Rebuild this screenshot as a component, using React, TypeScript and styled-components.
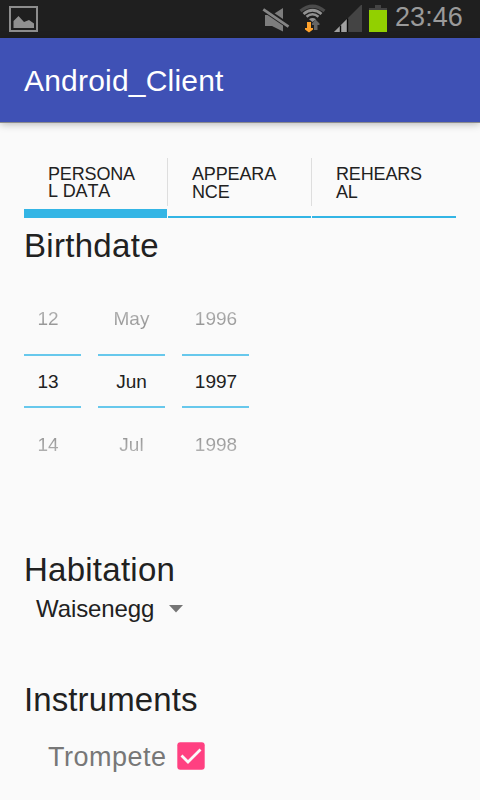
import React from 'react';
import styled, { createGlobalStyle } from 'styled-components';

const GlobalStyle = createGlobalStyle`
  * { box-sizing: border-box; }
  html, body { margin: 0; background: #fafafa; }
  body { font-family: "Liberation Sans", Arial, sans-serif; overflow: hidden; }
`;

const Screen = styled.div`
  width: 480px;
  height: 800px;
  overflow: hidden;
  background: #fafafa;
  color: #212121;
  display: flex;
  flex-direction: column;
`;

const StatusBar = styled.header`
  height: 38px;
  flex: none;
  padding: 0 17px 0 9px;
  background: #1f1f1f;
  display: flex;
  align-items: flex-start;
  justify-content: space-between;
`;

const StatusGroup = styled.div`
  display: flex;
  height: 38px;
`;

const StatusIcon = styled.svg<{ $gap?: number }>`
  display: block;
  flex: none;
  margin-right: ${({ $gap = 0 }) => $gap}px;
`;

const Clock = styled.time`
  font-size: 27px;
  line-height: 34px;
  letter-spacing: 0.1px;
  color: #9a9a9a;
`;

const AppBar = styled.div`
  height: 84px;
  flex: none;
  padding: 1px 24px 0;
  display: flex;
  align-items: center;
  background: #3f51b5;
  box-shadow: 0 1px 0 #8b8b8d, 0 2px 8px rgba(0, 0, 0, 0.28);
`;

const AppTitle = styled.h1`
  margin: 0;
  font-size: 30px;
  font-weight: 400;
  letter-spacing: 0.2px;
  color: #fff;
`;

const Content = styled.main`
  padding: 36px 24px 0;
`;

const Tabs = styled.nav`
  height: 60px;
  display: grid;
  grid-template-columns: 143px 1px 143px 1px 144px;
`;

const Tab = styled.button<{ $active?: boolean }>`
  border: 0;
  border-bottom: ${({ $active }) => ($active ? 9 : 2)}px solid #33b5e5;
  padding: ${({ $active }) => ($active ? 8 : 7)}px 24px 0;
  background: transparent;
  color: #212121;
  font: 18px/${({ $active }) => ($active ? 17 : 18)}px "Liberation Sans", Arial, sans-serif;
  font-kerning: none;
  letter-spacing: -0.15px;
  text-align: left;
  display: flex;
  align-items: flex-start;
  white-space: pre;
`;

const TabDivider = styled.span`
  height: 48px;
  background: #dedede;
`;

const Section = styled.section<{ $height: number }>`
  height: ${({ $height }) => $height}px;
`;

const BirthdateSection = styled(Section)`
  padding-top: 8px;
`;

const Heading = styled.h2<{ $spacing?: number }>`
  margin: 0;
  height: 40px;
  font-size: 33px;
  line-height: 40px;
  font-weight: 400;
  letter-spacing: ${({ $spacing = 0.3 }) => $spacing}px;
`;

const DatePicker = styled.div`
  margin-top: 21px;
  display: grid;
  grid-template-columns: 57px 67px 67px;
  column-gap: 17px;
`;

const Wheel = styled.div<{ $inset?: number }>`
  display: flex;
  flex-direction: column;
  text-align: center;
  font-size: 19px;
  text-indent: ${({ $inset = 0 }) => $inset}px;
`;

const Neighbour = styled.div<{ $side: 'before' | 'after' }>`
  height: 63px;
  line-height: 63px;
  color: transparent;
  background: linear-gradient(
    ${({ $side }) => ($side === 'before' ? 'to bottom' : 'to top')},
    #b4b4b4 35%,
    #929292 65%
  );
  background-clip: text;
  -webkit-background-clip: text;
`;

const Selected = styled.div`
  height: 54px;
  margin: 4px 0 5px;
  border-top: 2px solid #67c8ec;
  border-bottom: 2px solid #67c8ec;
  line-height: 51px;
`;

const Spinner = styled.div`
  height: 38px;
  padding-left: 12px;
  display: flex;
  align-items: center;
  font-size: 24px;
  letter-spacing: -0.1px;
`;

const Caret = styled.svg`
  display: block;
  margin: -1px 0 0 15px;
`;

const CheckRow = styled.label`
  margin-top: 16px;
  padding-left: 24px;
  height: 42px;
  display: flex;
  align-items: center;
  color: #777;
  font-size: 27px;
  letter-spacing: 0.5px;
`;

const CheckBox = styled.svg`
  display: block;
  margin: -2px 0 0 10px;
`;

const tabs = [
  { lines: 'PERSONA\nL DATA', active: true },
  { lines: 'APPEARA\nNCE' },
  { lines: 'REHEARS\nAL' },
];

const wheels = [
  { values: ['12', '13', '14'], inset: -9 },
  { values: ['May', 'Jun', 'Jul'], inset: 0 },
  { values: ['1996', '1997', '1998'], inset: 1 },
];

function PictureIcon() {
  return (
    <StatusIcon width="29" height="38" viewBox="0 0 29 38">
      <path d="M1 7H28V31H1Z" fill="none" stroke="#8d8d8d" strokeWidth="2" />
      <path d="M4.5 28V21L9.5 16L15 22L20 20L25 23.5V28Z" fill="#909090" />
    </StatusIcon>
  );
}

function MutedIcon() {
  return (
    <StatusIcon width="28" height="38" viewBox="0 0 28 38" $gap={9}>
      <path d="M3 15H10L21 8V31.5L10 26H3Z" fill="#7d7d7d" />
      <path d="M0 8L28 27" stroke="#1f1f1f" strokeWidth="5.4" />
      <path d="M1.3 9.3L26.5 26.6" stroke="#858585" strokeWidth="2.8" />
    </StatusIcon>
  );
}

function WifiIcon() {
  return (
    <StatusIcon width="27" height="38" viewBox="0 0 27 38" $gap={8}>
      <path d="M1.5 11Q13.5 1.5 25.5 11" fill="none" stroke="#4b4b4b" strokeWidth="3.2" />
      <path d="M4.5 14Q13.5 6.5 22.5 14" fill="none" stroke="#929292" strokeWidth="2.8" />
      <path d="M7.5 16.8Q13.5 11.8 19.5 16.8" fill="none" stroke="#929292" strokeWidth="2.5" />
      <path d="M10 19.3Q13.5 16.8 17 19.3L13.5 22Z" fill="#929292" />
      <path d="M15 30V25H13V23.5L16.5 19.5L20.5 23.5V25H18.5V30Z" fill="#656565" />
      <path d="M8 22H12V28H14V29.5L10 32.5L6 29.5V28H8Z" fill="#ffa22c" />
    </StatusIcon>
  );
}

function SignalIcon() {
  return (
    <StatusIcon width="29" height="38" viewBox="0 0 29 38" $gap={6}>
      <path d="M0 32L27 5H28V32Z" fill="#444" />
      <path d="M0 32L13 19V32Z" fill="#a0a0a0" />
      <path d="M6.5 25.5V32M13.5 18.5V32" stroke="#090909" strokeWidth="1.4" />
    </StatusIcon>
  );
}

function BatteryIcon() {
  return (
    <StatusIcon width="18" height="38" viewBox="0 0 18 38" $gap={8}>
      <path d="M0 8H6V5H12V8H18V10H0Z" fill="#444" />
      <path d="M0 10H18V32H0Z" fill="#92d000" />
    </StatusIcon>
  );
}

export default function App() {
  return (
    <>
      <GlobalStyle />
      <Screen>
        <StatusBar>
          <PictureIcon />
          <StatusGroup>
            <MutedIcon />
            <WifiIcon />
            <SignalIcon />
            <BatteryIcon />
            <Clock>23:46</Clock>
          </StatusGroup>
        </StatusBar>
        <AppBar>
          <AppTitle>Android_Client</AppTitle>
        </AppBar>
        <Content>
          <Tabs>
            {tabs.map((tab, i) => (
              <React.Fragment key={tab.lines}>
                {i > 0 && <TabDivider />}
                <Tab $active={tab.active}>{tab.lines}</Tab>
              </React.Fragment>
            ))}
          </Tabs>
          <BirthdateSection $height={332}>
            <Heading>Birthdate</Heading>
            <DatePicker>
              {wheels.map(({ values, inset }) => (
                <Wheel key={values[1]} $inset={inset}>
                  <Neighbour $side="before">{values[0]}</Neighbour>
                  <Selected>{values[1]}</Selected>
                  <Neighbour $side="after">{values[2]}</Neighbour>
                </Wheel>
              ))}
            </DatePicker>
          </BirthdateSection>
          <Section $height={130}>
            <Heading $spacing={0.25}>Habitation</Heading>
            <Spinner>
              Waisenegg
              <Caret width="14" height="8" viewBox="0 0 14 8">
                <path d="M0 0H14L7 7.5Z" fill="#757575" />
              </Caret>
            </Spinner>
          </Section>
          <Section $height={120}>
            <Heading $spacing={0.1}>Instruments</Heading>
            <CheckRow>
              Trompete
              <CheckBox width="28" height="28" viewBox="0 0 28 28">
                <rect x="0.3" y="0.3" width="27.4" height="27.4" rx="3" fill="#ff4081" />
                <path d="M4.5 13.5L11 20L23.5 7.5" fill="none" stroke="#fafafa" strokeWidth="2.8" />
              </CheckBox>
            </CheckRow>
          </Section>
        </Content>
      </Screen>
    </>
  );
}
